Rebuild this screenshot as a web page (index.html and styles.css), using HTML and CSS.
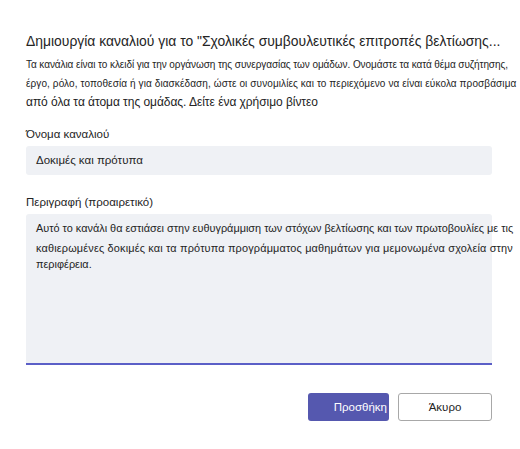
FILE: index.html
```
<!DOCTYPE html>
<html lang="el">
<head>
<meta charset="utf-8">
<link rel="stylesheet" href="styles.css">
</head>
<body>
<div class="dialog">
  <h1 class="title">Δημιουργία καναλιού για το "Σχολικές συμβουλευτικές επιτροπές βελτίωσης...</h1>
  <div class="intro">
    <span class="intro-line small">Τα κανάλια είναι το κλειδί για την οργάνωση της συνεργασίας των ομάδων. Ονομάστε τα κατά θέμα συζήτησης,</span>
    <span class="intro-line small wide">έργο, ρόλο, τοποθεσία ή για διασκέδαση, ώστε οι συνομιλίες και το περιεχόμενο να είναι εύκολα προσβάσιμα</span>
    <span class="intro-line large">από όλα τα άτομα της ομάδας. Δείτε ένα χρήσιμο βίντεο</span>
  </div>
  <div class="field">
    <div class="label">Όνομα καναλιού</div>
    <div class="input">Δοκιμές και πρότυπα</div>
  </div>
  <div class="field field-desc">
    <div class="label">Περιγραφή (προαιρετικό)</div>
    <div class="textarea">
      <span class="ta-line">Αυτό το κανάλι θα εστιάσει στην ευθυγράμμιση των στόχων βελτίωσης και των πρωτοβουλίες με τις</span>
      <span class="ta-line wide">καθιερωμένες δοκιμές και τα πρότυπα προγράμματος μαθημάτων για μεμονωμένα σχολεία στην</span>
      <span class="ta-line last">περιφέρεια.</span>
    </div>
  </div>
  <div class="actions">
    <button class="btn btn-primary">Προσθήκη</button>
    <button class="btn btn-secondary">Άκυρο</button>
  </div>
</div>
</body>
</html>
```
FILE: styles.css
```
html, body {
  margin: 0;
  padding: 0;
  background: #ffffff;
}
body {
  font-family: "Liberation Sans", Arial, sans-serif;
  color: #242424;
  width: 520px;
  height: 449px;
  overflow: hidden;
}
.dialog {
  width: 466px;
  padding: 31px 28px 0 26px;
  display: flex;
  flex-direction: column;
}
.title {
  margin: 0;
  font-size: 13.9px;
  font-weight: 400;
  line-height: 20px;
  white-space: nowrap;
}
.intro {
  margin-top: 4px;
  display: flex;
  flex-direction: column;
}
.intro-line {
  display: block;
  white-space: nowrap;
}
.intro-line.small {
  font-size: 10px;
  line-height: 19px;
  letter-spacing: -0.07px;
}
.intro-line.small.wide {
  letter-spacing: 0.1px;
}
.intro-line.large {
  font-size: 12px;
  line-height: 18px;
  letter-spacing: -0.05px;
}
.field {
  margin-top: 15px;
  display: flex;
  flex-direction: column;
}
.field-desc {
  margin-top: 19px;
}
.label {
  font-size: 11.5px;
  line-height: 16px;
  margin-bottom: 4px;
}
.input {
  height: 29px;
  box-sizing: border-box;
  background: #eff1f5;
  border-radius: 3px;
  padding: 0 10px;
  font-size: 11.5px;
  line-height: 29px;
}
.textarea {
  height: 151px;
  box-sizing: border-box;
  background: #eff1f5;
  border-radius: 3px 3px 0 0;
  border-bottom: 2px solid #5b5fc7;
  padding: 4px 10px;
  display: flex;
  flex-direction: column;
}
.ta-line {
  display: block;
  white-space: nowrap;
  font-size: 10.9px;
  line-height: 20px;
}
.ta-line.wide {
  letter-spacing: 0.17px;
}
.ta-line.last {
  line-height: 12px;
}
.actions {
  margin-top: 28px;
  display: flex;
  justify-content: flex-end;
  gap: 9px;
}
.btn {
  height: 28px;
  box-sizing: border-box;
  border-radius: 3px;
  font-family: inherit;
  font-size: 11.5px;
  padding: 0;
  cursor: pointer;
}
.btn-primary {
  width: 81px;
  background: #5558af;
  border: none;
  color: #ffffff;
  text-align: right;
  padding-right: 2px;
}
.btn-secondary {
  width: 94px;
  background: #ffffff;
  border: 1px solid #a8a8a8;
  color: #242424;
}
```
